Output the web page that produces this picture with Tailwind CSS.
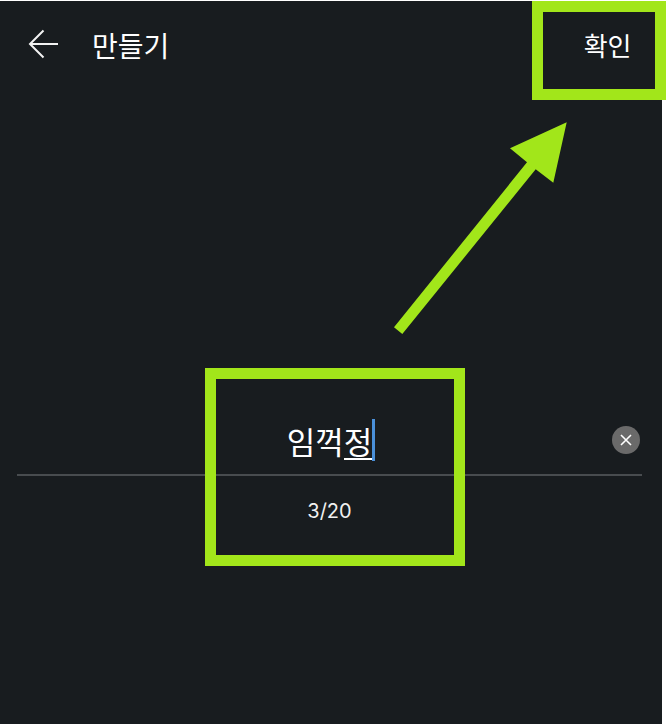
<!DOCTYPE html>
<html lang="ko">
<head>
<meta charset="utf-8">
<script src="https://cdn.jsdelivr.net/npm/@tailwindcss/browser@4"></script>
</head>
<body class="bg-white">
<div class="relative w-[666px] h-[724px] overflow-hidden bg-white pt-px">
  <main class="w-[661.5px] h-[723px] bg-[#181c1f] flex flex-col text-white font-['Noto_Sans_CJK_KR','Noto_Sans',sans-serif]">
    <header class="h-[90px] flex items-center pl-[28px] pr-[30px] shrink-0">
      <svg class="w-[30px] h-[30px] shrink-0 -translate-y-[2px]" viewBox="0 0 30 30" fill="none" stroke="#f2f2f2" stroke-width="2">
        <path d="M30 15H2.5M15.5 1.5L2 15L15.5 28.5"/>
      </svg>
      <h1 class="ml-[34px] text-[28px] leading-none font-normal -translate-y-[1px]">만들기</h1>
      <button class="ml-auto text-[26px] leading-none font-normal -translate-y-[1px]">확인</button>
    </header>
    <section class="mt-[304px] flex flex-col items-center pl-[17px] pr-[19.5px]">
      <div class="relative w-full h-[81px] border-b-2 border-[#484c4f] flex justify-center">
        <div class="relative pt-[23px] text-[31px] leading-[46px]">
          <span>임꺽</span><span class="relative">정<span class="absolute left-0 right-0 bottom-[3.5px] h-[2px] bg-white"></span></span>
          <span class="absolute right-[-3px] top-[24px] w-[3.5px] h-[42px] bg-[#4a90d9]"></span>
        </div>
        <button class="absolute right-[2px] top-[31px] w-[28px] h-[28px] rounded-full bg-[#6a6a6a] flex items-center justify-center" aria-label="지우기">
          <svg class="w-[12px] h-[12px]" viewBox="0 0 12 12" fill="none" stroke="#fff" stroke-width="1.6"><path d="M1 1L11 11M11 1L1 11"/></svg>
        </button>
      </div>
      <p class="mt-[21px] text-[20px] leading-[28px] font-['Inter',sans-serif] text-[#f0f0f0]">3/20</p>
    </section>
  </main>
  <div class="absolute left-[532px] top-px w-[134px] h-[99px] border-[11.5px] border-[#a2e61a]"></div>
  <div class="absolute left-[204.5px] top-[367.5px] w-[260px] h-[198px] border-[11px] border-[#a2e61a]"></div>
  <svg class="absolute left-0 top-0 w-[666px] h-[724px] pointer-events-none" viewBox="0 0 666 724" fill="#a2e61a">
    <polygon points="394,327.3 402.3,334 535.7,169.3 553.3,182.7 566.7,122.3 510,148.3 527,162.3"/>
  </svg>
</div>
</body>
</html>
